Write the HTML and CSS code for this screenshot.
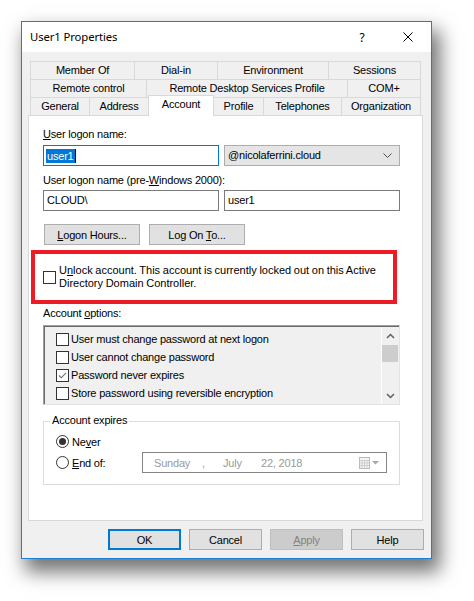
FILE: index.html
```html
<!DOCTYPE html>
<html>
<head>
<meta charset="utf-8">
<title>User1 Properties</title>
<link rel="stylesheet" href="styles.css">
</head>
<body>
<div class="stage">
  <div class="window">
    <div class="titlebar">
      <span class="title">User1 Properties</span>
      <span class="tb-btn help">?</span>
      <span class="tb-btn close">
        <svg width="10" height="10" viewBox="0 0 10 10"><path d="M0.5 0.5 L9.5 9.5 M9.5 0.5 L0.5 9.5" stroke="#000" stroke-width="1" fill="none"/></svg>
      </span>
    </div>
    <div class="client">
      <div class="tabs">
        <div class="tabrow r1">
          <div class="tab">Member Of</div>
          <div class="tab">Dial-in</div>
          <div class="tab">Environment</div>
          <div class="tab">Sessions</div>
        </div>
        <div class="tabrow r2">
          <div class="tab">Remote control</div>
          <div class="tab">Remote Desktop Services Profile</div>
          <div class="tab">COM+</div>
        </div>
        <div class="tabrow r3">
          <div class="tab">General</div>
          <div class="tab">Address</div>
          <div class="tab active">Account</div>
          <div class="tab after-active">Profile</div>
          <div class="tab">Telephones</div>
          <div class="tab">Organization</div>
        </div>
      </div>
      <div class="panel">
        <div class="lbl first"><u>U</u>ser logon name:</div>
        <div class="row r-a">
          <div class="field focus"><span class="sel">user1</span><span class="caret"></span></div>
          <div class="field combo"><span class="combo-text">@nicolaferrini.cloud</span>
            <svg class="chev" width="9" height="5" viewBox="0 0 9 5"><path d="M0.5 0.5 L4.5 4.5 L8.5 0.5" fill="none" stroke="#505050" stroke-width="1"/></svg>
          </div>
        </div>
        <div class="lbl second">User logon name (pre-<u>W</u>indows 2000):</div>
        <div class="row r-b">
          <div class="field"><span class="ftext">CLOUD\</span></div>
          <div class="field"><span class="ftext">user1</span></div>
        </div>
        <div class="btnrow">
          <div class="btn wide"><span><u>L</u>ogon Hours...</span></div>
          <div class="btn wide"><span>Log On <u>T</u>o...</span></div>
        </div>
        <div class="redbox">
          <span class="cb"></span>
          <div class="unlock-text"><span>U</span><u>n</u><span>lock account. This account is currently locked out on this Active</span><br><span>Directory Domain Controller.</span></div>
        </div>
        <div class="lbl options">Account <u>o</u>ptions:</div>
        <div class="listbox">
          <div class="items">
            <div class="item"><span class="cb"></span><span>User must change password at next logon</span></div>
            <div class="item"><span class="cb"></span><span>User cannot change password</span></div>
            <div class="item"><span class="cb checked"><svg width="11" height="11" viewBox="0 0 11 11"><path d="M2 5.5 L4.3 7.8 L9 2.8" fill="none" stroke="#6d6d6d" stroke-width="1.1"/></svg></span><span>Password never expires</span></div>
            <div class="item"><span class="cb"></span><span>Store password using reversible encryption</span></div>
          </div>
          <div class="scroll">
            <div class="arrow"><svg width="9" height="6" viewBox="0 0 9 6"><path d="M1 5 L4.5 1.5 L8 5" fill="none" stroke="#606060" stroke-width="1.5"/></svg></div>
            <div class="thumb"></div>
            <div class="spacer"></div>
            <div class="arrow"><svg width="9" height="6" viewBox="0 0 9 6"><path d="M1 1 L4.5 4.5 L8 1" fill="none" stroke="#606060" stroke-width="1.5"/></svg></div>
          </div>
        </div>
        <div class="group">
          <div class="legend">Account expires</div>
          <div class="radio-row first-radio">
            <span class="radio on"><span class="dot"></span></span>
            <span class="rlabel">Ne<u>v</u>er</span>
          </div>
          <div class="radio-row">
            <span class="radio"></span>
            <span class="rlabel"><u>E</u>nd of:</span>
            <div class="datebox">
              <span class="d-day">Sunday</span>
              <span class="d-comma">,</span>
              <span class="d-month">July</span>
              <span class="d-year">22, 2018</span>
              <svg class="cal" width="21" height="12" viewBox="0 0 21 12">
                <rect x="0.5" y="0.5" width="10" height="11" fill="#f4f4f4" stroke="#b9b9b9"/>
                <path d="M0.5 3.5 H10.5 M0.5 6 H10.5 M0.5 8.5 H10.5 M3 3.5 V11.5 M5.5 3.5 V11.5 M8 3.5 V11.5" stroke="#cfcfcf" stroke-width="1"/>
                <polygon points="13,4 20,4 16.5,7.5" fill="#a9a9a9"/>
              </svg>
            </div>
          </div>
        </div>
      </div>
      <div class="buttons">
        <div class="btn dlg ok"><span>OK</span></div>
        <div class="btn dlg"><span>Cancel</span></div>
        <div class="btn dlg disabled"><span><u>A</u>pply</span></div>
        <div class="btn dlg"><span>Help</span></div>
      </div>
    </div>
  </div>
</div>
</body>
</html>
```
FILE: styles.css
```css
html, body {
  margin: 0;
  background: #fff;
}
body {
  min-height: 601px;
  font-family: "Liberation Sans", Arial, sans-serif;
  font-size: 11px;
  letter-spacing: -0.2px;
  color: #000;
}
u { text-decoration: underline; text-underline-offset: 1px; }

.stage { padding: 21px 0 0 21px; }

.window {
  width: 411px;
  height: 538px;
  box-sizing: border-box;
  border: 1px solid #1a7fd5;
  background: #f0f0f0;
  box-shadow: 6px 11px 18px 2px rgba(0, 0, 0, 0.55);
  display: flex;
  flex-direction: column;
}

.titlebar {
  height: 30px;
  background: #fff;
  display: flex;
  align-items: stretch;
  flex: none;
}
.title {
  flex: 1;
  padding-left: 8px;
  font-family: "Noto Sans", "Open Sans", sans-serif;
  font-size: 11.3px;
  letter-spacing: -0.1px;
  line-height: 30px;
}
.tb-btn {
  width: 46px;
  display: flex;
  align-items: center;
  justify-content: center;
}
.help {
  font-family: "Noto Sans", sans-serif;
  font-size: 12px;
  letter-spacing: 0;
}

.client {
  padding: 9px 8px 8px 6px;
}

.tabs { margin: 0 2px; }
.tabrow {
  display: flex;
  height: 18px;
}
.tab {
  box-sizing: border-box;
  height: 18px;
  border-top: 1px solid #d9d9d9;
  border-left: 1px solid #d9d9d9;
  text-align: center;
  line-height: 17px;
  white-space: nowrap;
  background: #f0f0f0;
}
.tab:last-child { border-right: 1px solid #d9d9d9; }

.r1 .tab:nth-child(1) { width: 104px; }
.r1 .tab:nth-child(2) { width: 83px; }
.r1 .tab:nth-child(3) { width: 111px; }
.r1 .tab:nth-child(4) { width: 93px; }
.r2 .tab:nth-child(1) { width: 116px; }
.r2 .tab:nth-child(2) { width: 201px; }
.r2 .tab:nth-child(3) { width: 74px; }
.r3 .tab:nth-child(1) { width: 59px; }
.r3 .tab:nth-child(2) { width: 59px; }
.r3 .tab:nth-child(3) { width: 66px; }
.r3 .tab:nth-child(4) { width: 49px; }
.r3 .tab:nth-child(5) { width: 78px; }
.r3 .tab:nth-child(6) { width: 80px; }

.tab.active {
  height: 21px;
  margin-top: -2px;
  background: #fff;
  border-right: 1px solid #d9d9d9;
  position: relative;
  z-index: 1;
}
.tab.after-active { border-left: none; }

.panel {
  box-sizing: border-box;
  height: 406px;
  border: 1px solid #d9d9d9;
  background: #fff;
  padding: 12px 22px 0 14px;
}

.lbl {
  height: 13px;
  line-height: 13px;
  white-space: nowrap;
}
.lbl.second { margin-top: 8px; }
.lbl.options { margin-top: 3px; }

.row {
  display: flex;
  gap: 5px;
}
.row.r-a { margin-top: 4px; }
.row.r-b { margin-top: 3px; }

.field {
  width: 176px;
  height: 21px;
  box-sizing: border-box;
  border: 1px solid #7a7a7a;
  background: #fff;
  display: flex;
  align-items: center;
  padding-left: 2px;
  line-height: 13px;
}
.field.focus { border-color: #0078d7; }
.sel {
  background: #0078d7;
  color: #fff;
  padding: 0 1px;
  height: 14px;
  line-height: 14px;
}
.caret {
  width: 1px;
  height: 14px;
  background: #000;
}
.ftext { padding-left: 1px; }
.field.combo {
  background: #e5e5e5;
  border-color: #adadad;
  padding-left: 3px;
  justify-content: space-between;
}
.chev { margin-right: 7px; }

.btnrow {
  display: flex;
  gap: 9px;
  margin-top: 13px;
  padding-left: 1px;
}
.btn {
  height: 21px;
  box-sizing: border-box;
  border: 1px solid #adadad;
  background: #e1e1e1;
  display: flex;
  align-items: center;
  justify-content: center;
  white-space: nowrap;
}
.btn.wide { width: 96px; }

.redbox {
  margin: 5px 3px 0 -12px;
  border: 4px solid #ed1c24;
  padding: 10px 4px 10px 8px;
  display: flex;
  align-items: center;
  gap: 3px;
}
.unlock-text {
  line-height: 13px;
  letter-spacing: 0;
  word-spacing: -0.4px;
  white-space: nowrap;
}

.cb {
  width: 13px;
  height: 13px;
  box-sizing: border-box;
  border: 1px solid #333;
  background: #fff;
  flex: none;
  display: flex;
  align-items: center;
  justify-content: center;
}

.listbox {
  margin-top: 5px;
  height: 80px;
  box-sizing: border-box;
  border: 1px solid;
  border-color: #a0a0a0 #e3e3e3 #e3e3e3 #a0a0a0;
  box-shadow: inset 1px 1px 0 #696969;
  background: #f0f0f0;
  display: flex;
}
.items {
  flex: 1;
  padding: 4px 0 0 12px;
}
.item {
  height: 18px;
  display: flex;
  align-items: center;
  gap: 2px;
  white-space: nowrap;
}
.scroll {
  width: 17px;
  border-left: 1px solid #fff;
  background: #f0f0f0;
  display: flex;
  flex-direction: column;
  margin-top: 1px;
}
.arrow {
  height: 17px;
  display: flex;
  align-items: center;
  justify-content: center;
}
.thumb {
  height: 17px;
  margin: 1px 1px 0 0;
  background: #cdcdcd;
}
.spacer { flex: 1; }

.group {
  margin-top: 16px;
  height: 64px;
  box-sizing: border-box;
  border: 1px solid #dcdcdc;
  padding: 0 0 0 12px;
}
.legend {
  width: fit-content;
  margin: -8px 0 0 -6px;
  padding: 0 2px;
  background: #fff;
  height: 13px;
  line-height: 13px;
}
.radio-row {
  height: 21px;
  display: flex;
  align-items: center;
  gap: 3px;
}
.radio-row.first-radio { margin-top: 4px; }
.radio {
  width: 13px;
  height: 13px;
  box-sizing: border-box;
  border: 1px solid #333;
  border-radius: 50%;
  background: #fff;
  flex: none;
  display: flex;
  align-items: center;
  justify-content: center;
}
.dot {
  width: 7px;
  height: 7px;
  border-radius: 50%;
  background: #333;
}
.rlabel { width: 67px; white-space: nowrap; }
.datebox {
  width: 245px;
  height: 21px;
  box-sizing: border-box;
  border: 1px solid #858585;
  background: #fff;
  display: flex;
  align-items: center;
  padding-left: 11px;
  color: #9a9a9a;
  white-space: nowrap;
}
.d-day { width: 48px; }
.d-comma { width: 21px; }
.d-month { width: 38px; }
.d-year { flex: 1; }
.cal { margin-right: 6px; }

.buttons {
  display: flex;
  justify-content: flex-end;
  gap: 8px;
  margin: 8px -1px 0 0;
}
.btn.dlg { width: 73px; }
.btn.ok { border: 2px solid #0078d7; }
.btn.disabled {
  background: #cccccc;
  border-color: #bfbfbf;
  color: #838383;
}
```
